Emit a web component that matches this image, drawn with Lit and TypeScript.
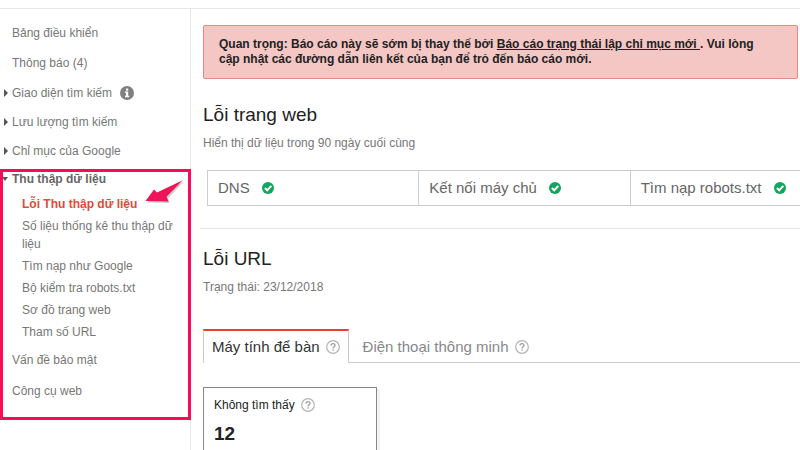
import { LitElement, html, css } from "lit";
import { customElement, state } from "lit/decorators.js";

const helpIcon = html`<svg class="icon" width="14" height="14" viewBox="0 0 14 14" aria-hidden="true">
  <circle cx="7" cy="7" r="6.3" fill="none" stroke="#b4b4b4" stroke-width="1.2" />
  <path d="M5 5.6C5 4.3 5.9 3.6 7 3.6s2 .7 2 1.8C9 6.8 7.1 6.8 7.1 8.4" fill="none" stroke="#a0a0a0" stroke-width="1.4" />
  <rect x="6.4" y="9.3" width="1.4" height="1.4" fill="#a0a0a0" />
</svg>`;

const okIcon = html`<svg class="icon" width="12" height="12" viewBox="0 0 12 12" role="img" aria-label="OK">
  <circle cx="6" cy="6" r="6" fill="#12a55c" />
  <path d="M2.900 6 5.200 8.300 9.300 3.800" fill="none" stroke="#fff" stroke-width="2" />
</svg>`;

const infoIcon = html`<svg class="icon info" width="14" height="14" viewBox="0 0 14 14" aria-hidden="true">
  <circle cx="7" cy="7" r="7" fill="#808080" />
  <rect x="6" y="2.6" width="2.2" height="2" fill="#fff" />
  <path d="M5 5.6h3.2v4.2H9.2v1.4H5V9.8h1V7H5z" fill="#fff" />
</svg>`;

@customElement("app-sidebar")
export class AppSidebar extends LitElement {
  static styles = css`
    :host {
      display: block;
      box-sizing: border-box;
      flex: 0 0 191px;
      border-right: 1px solid #e8e8e8;
      padding-top: 9px;
      line-height: 18px;
      color: #777;
    }
    a { color: inherit; text-decoration: none; }
    .row { display: flex; align-items: center; height: 30px; padding-left: 4px; }
    .row::before { content: ""; box-sizing: border-box; width: 8px; flex: none; }
    .closed { height: 29px; }
    .closed::before {
      height: 8px;
      border: 4px solid transparent;
      border-left-color: #555;
      border-right: 0;
      width: 4px;
      margin-right: 4px;
    }
    .open { height: 28px; padding-left: 2px; font-weight: bold; color: #666; }
    .open::before {
      height: 4px;
      width: 6px;
      margin-right: 4px;
      border: 3px solid transparent;
      border-top: 4px solid #555;
      border-bottom: 0;
    }
    .after { height: 31px; }
    .info { margin-left: 8px; }
    .icon { flex: none; display: block; }
    .group { position: relative; }
    .frame {
      position: absolute;
      inset: 4px -1px -14px 0;
      border: 3px solid #fb0a56;
      pointer-events: none;
    }
    .sub { list-style: none; margin: 0; padding: 0 8px 1px 22px; }
    .sub li { padding: 2px 0; }
    .current { font-weight: bold; color: #dd4b39; }
    .pointer { position: absolute; left: 144px; top: 13px; }
  `;

  render() {
    return html`<nav>
      <a class="row" href="#dashboard">Bảng điều khiển</a>
      <a class="row" href="#messages">Thông báo (4)</a>
      <a class="row closed" href="#appearance">Giao diện tìm kiếm ${infoIcon}</a>
      <a class="row closed" href="#traffic">Lưu lượng tìm kiếm</a>
      <a class="row closed" href="#index">Chỉ mục của Google</a>
      <div class="group">
        <a class="row open" href="#crawl">Thu thập dữ liệu</a>
        <ul class="sub">
          <li><a class="current" href="#errors">Lỗi Thu thập dữ liệu</a></li>
          <li><a href="#stats">Số liệu thống kê thu thập dữ liệu</a></li>
          <li><a href="#fetch">Tìm nạp như Google</a></li>
          <li><a href="#robots">Bộ kiểm tra robots.txt</a></li>
          <li><a href="#sitemaps">Sơ đồ trang web</a></li>
          <li><a href="#params">Tham số URL</a></li>
        </ul>
        <a class="row after" href="#security">Vấn đề bảo mật</a>
        <a class="row after" href="#tools">Công cụ web</a>
        <div class="frame"></div>
        <svg class="pointer" width="42" height="28" viewBox="0 0 42 28" aria-hidden="true">
          <path d="M3 24.500 12 14.500 14.500 17.500 39.500 3.800 24 20.500 25.500 25Z" fill="#999" opacity=".5" />
          <path d="M1.500 23 10 11.500 13 14.500 38.700 2.300 22.500 18.800 24.500 23.500Z" fill="#ee1458" />
        </svg>
      </div>
    </nav>`;
  }
}

@customElement("app-root")
export class AppRoot extends LitElement {
  @state() private tab = 0;

  static styles = css`
    :host {
      display: flex;
      flex-direction: column;
      height: 100vh;
      overflow: hidden;
      background: #fff;
      font-family: "Liberation Sans", Arial, sans-serif;
      font-size: 12px;
      line-height: 18px;
      color: #222;
    }
    .top { flex: none; height: 8px; border-bottom: 1px solid #e8e8e8; }
    .body { display: flex; flex: 1; min-height: 0; }
    main { flex: 1; min-width: 0; padding: 16px 0 0 12px; overflow: hidden; }
    .alert {
      margin: 0 2px 24px 0;
      padding: 11px 24px 11px 15px;
      border: 1px solid #e58a80;
      border-radius: 2px;
      background: #f4c7c5;
      font-weight: bold;
      line-height: 15px;
      color: #222;
    }
    .alert a { color: inherit; }
    h2 { margin: 0; font-size: 19px; line-height: 24px; font-weight: normal; }
    .note { margin: 7px 0 0; color: #777; }
    .checks {
      width: calc(100% + 38px);
      margin: 18px 0 0 4px;
      border-collapse: collapse;
      table-layout: fixed;
      font-size: 15px;
      color: #666;
    }
    .checks td { height: 34px; padding: 0 10px; border: 1px solid #ccc; }
    .cell { display: flex; align-items: center; gap: 12px; }
    .icon { flex: none; display: block; }
    .rule { margin: 22px 0 18px -3px; border: 0; border-top: 1px solid #e5e5e5; }
    .tabs { display: flex; margin-top: 33px; border-bottom: 1px solid #ccc; }
    .tab {
      display: flex;
      align-items: center;
      gap: 6px;
      box-sizing: border-box;
      height: 34px;
      margin-bottom: -1px;
      padding: 0 8px;
      border: 0 solid #ccc;
      border-top: 2px solid transparent;
      background: none;
      font: inherit;
      font-size: 15px;
      color: #888;
    }
    .tab.active {
      border-left-width: 1px;
      border-right-width: 1px;
      border-top-color: #e8412f;
      background: #fff;
      color: #333;
    }
    .tab + .tab { padding-left: 14px; }
    .card {
      box-sizing: border-box;
      width: 174px;
      margin-top: 24px;
      padding: 8px 10px 16px;
      border: 1px solid #888;
      box-shadow: 3px 2px 0 #f2f2f2;
    }
    .label { display: flex; align-items: center; gap: 6px; }
    .count { margin-top: 8px; font-size: 19px; line-height: 24px; font-weight: bold; }
  `;

  render() {
    const checks = ["DNS", "Kết nối máy chủ", "Tìm nạp robots.txt"];
    const tabs = ["Máy tính để bàn", "Điện thoại thông minh"];
    return html`
      <div class="top"></div>
      <div class="body">
        <app-sidebar></app-sidebar>
        <main>
          <div class="alert">Quan trọng: Báo cáo này sẽ sớm bị thay thế bởi <a href="#new">Báo cáo trạng thái lập chỉ mục mới </a>. Vui lòng cập nhật các đường dẫn liên kết của bạn để trỏ đến báo cáo mới.</div>
          <h2>Lỗi trang web</h2>
          <p class="note">Hiển thị dữ liệu trong 90 ngày cuối cùng</p>
          <table class="checks">
            <tbody><tr>${checks.map((c) => html`<td><div class="cell">${c}${okIcon}</div></td>`)}</tr></tbody>
          </table>
          <hr class="rule" />
          <h2>Lỗi URL</h2>
          <p class="note">Trạng thái: 23/12/2018</p>
          <div class="tabs" role="tablist">
            ${tabs.map((t, i) => html`<button
              class="tab ${i === this.tab ? "active" : ""}"
              role="tab"
              aria-selected=${i === this.tab}
              @click=${() => (this.tab = i)}
            >${t}${helpIcon}</button>`)}
          </div>
          <div class="card">
            <div class="label">Không tìm thấy ${helpIcon}</div>
            <div class="count">12</div>
          </div>
        </main>
      </div>
    `;
  }
}
